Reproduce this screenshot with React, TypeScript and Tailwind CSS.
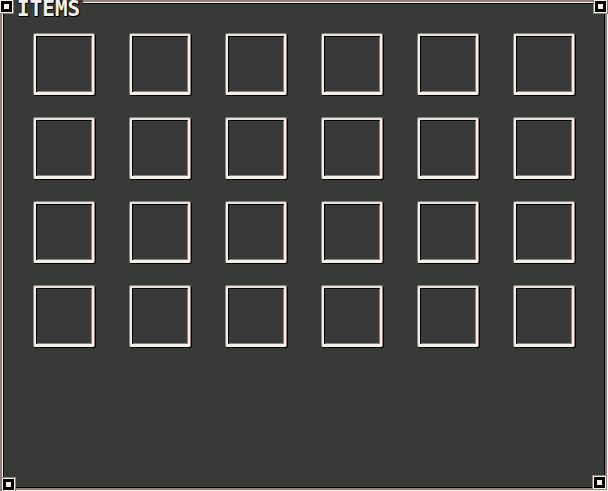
import React from "react";

function Corner({ className }: { className: string }) {
  return (
    <div
      className={`absolute w-[13px] h-[13px] bg-black border border-[#f4efe9] shadow-[0_0_0_1px_#8f807b] flex items-center justify-center ${className}`}
    >
      <div className="w-[5px] h-[5px] bg-[#f4efe9]" />
    </div>
  );
}

function Slot() {
  return (
    <div className="w-[62px] h-[62px] rounded-[2px] border border-[#8f807b] border-b-[#f4efe9] shadow-[1px_1px_0_#000]">
      <div className="w-full h-full rounded-[1px] border-2 border-[#f4efe9] border-t-[#e9e1dc] border-l-[#f4efe9] bg-[#3a3939] shadow-[inset_1px_1px_0_#000,inset_-1px_-1px_0_#8f807b]" />
    </div>
  );
}

export default function App() {
  const slots = Array.from({ length: 24 });
  return (
    <div className="relative w-[608px] h-[491px] bg-[#373a37] shadow-[inset_2px_2px_0_#8f807b,inset_-1px_-1px_0_#f4efe9,inset_3px_3px_0_#f4efe9,inset_-3px_-3px_0_#8f807b,inset_4px_4px_0_#000,inset_-4px_-4px_0_#000]">
      <div className="grid grid-cols-[repeat(6,64px)] gap-x-[32px] gap-y-[20px] pl-[33px] pt-[33px]">
        {slots.map((_, i) => (
          <div key={i} className="h-[64px]">
            <Slot />
          </div>
        ))}
      </div>

      <div
        className="absolute left-[14px] top-0 px-[3px] bg-[#373a37] text-[#f4efe9] font-bold leading-[19px] text-[21px] [text-shadow:1px_1px_0_#000,1px_0_0_#000,0_1px_0_#000]"
        style={{ fontFamily: '"DejaVu Sans Mono", monospace' }}
      >
        ITEMS
      </div>

      <Corner className="left-0 top-0" />
      <Corner className="right-[1px] top-0" />
      <Corner className="left-[2px] bottom-0" />
      <Corner className="right-[2px] bottom-[2px]" />
    </div>
  );
}
